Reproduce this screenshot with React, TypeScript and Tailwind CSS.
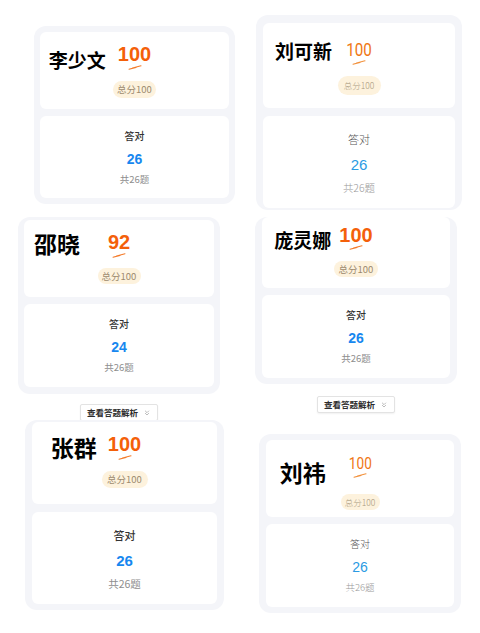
import { ChevronsDown } from "lucide-react";

type CardProps = {
  pos: string;
  pad: string;
  topH: string;
  bottomH: string;
  name: string;
  nameCls: string;
  score: string;
  scoreTop: string;
  thin?: boolean;
  big?: boolean;
  swooshMt: string;
  badgeMt: string;
  badgeCls: string;
  correct: string;
  button?: string;
};

const cjk = "font-['Noto_Sans_CJK_SC','Noto_Sans',sans-serif]";

function Swoosh({ thin }: { thin?: boolean }) {
  return (
    <svg width="14" height="5" viewBox="0 0 14 5" className="block">
      <path
        d="M1 4.2 L8 2.4 L4.5 3 L13 0.8"
        fill="none"
        stroke={thin ? "#f2913c" : "#f47b2a"}
        strokeWidth="1.1"
        strokeLinecap="round"
        strokeLinejoin="round"
      />
    </svg>
  );
}

function Card(p: CardProps) {
  return (
    <div className={`absolute flex flex-col items-center ${p.pos}`}>
      <div className={`w-full rounded-xl bg-[#f4f5f9] flex flex-col ${p.pad}`}>
        {/* score panel */}
        <div className={`rounded-md bg-white flex flex-col items-center ${p.topH} ${p.scoreTop}`}>
          <div className="w-full grid grid-cols-[1fr_auto_1fr] items-start">
            <div className={`justify-self-end ${p.nameCls}`}>
              <span className={`${cjk} font-bold text-black whitespace-nowrap block`}>{p.name}</span>
            </div>
            <div className="flex flex-col items-center">
              {p.thin ? (
                <span
                  className={`font-['Roboto',sans-serif] font-normal text-[#ef7714] leading-none scale-x-80 ${
                    p.big ? "text-[19px]" : "text-[17px]"
                  }`}
                >
                  {p.score}
                </span>
              ) : (
                <span className="font-['Liberation_Sans',sans-serif] font-bold text-[20px] leading-[20px] text-[#f4600a]">
                  {p.score}
                </span>
              )}
              <div className={p.swooshMt}>
                <Swoosh thin={p.thin} />
              </div>
            </div>
            <div />
          </div>
          <div
            className={`${p.badgeMt} ${p.badgeCls} rounded-full bg-[#fdf2dd] flex items-center justify-center ${cjk} ${
              p.thin ? "text-[8.5px] text-[#a8987c] font-light" : "text-[9.5px] text-[#9c8a6e]"
            }`}
          >
            总分100
          </div>
        </div>
        {/* correct panel */}
        <div className={`rounded-md bg-white flex flex-col items-center ${p.bottomH} ${p.big ? "mt-[8px] pt-[16px]" : "mt-[7px] pt-[13px]"}`}>
          <span
            className={`${cjk} ${p.big ? "text-[11px] leading-[15px]" : "text-[10px] leading-[14px]"} ${
              p.thin ? "text-[#555] font-light" : "text-[#333] font-medium"
            }`}
          >
            答对
          </span>
          <span
            className={`font-['Liberation_Sans',sans-serif] ${
              p.big ? "mt-[8px] text-[15px] leading-[20px]" : "mt-[7px] text-[14px] leading-[18px]"
            } ${p.thin ? "text-[#2b9be3] font-normal" : "text-[#1787ef] font-bold"}`}
          >
            {p.correct}
          </span>
          <span
            className={`${cjk} ${p.big ? "mt-[5px] text-[10.5px] leading-[15px]" : "mt-[4px] text-[9.5px] leading-[14px]"} ${
              p.thin ? "text-[#999] font-light" : "text-[#8e8e8e]"
            }`}
          >
            共26题
          </span>
        </div>
      </div>
      {p.button && (
        <div
          className={`${p.button} h-[17px] px-[6px] bg-white border border-[#e3e3e3] rounded-[2px] shadow-[0_1px_2px_rgba(0,0,0,0.06)] flex items-center gap-[5px]`}
        >
          <span className={`${cjk} text-[8.5px] font-bold text-[#2b2b2b] whitespace-nowrap`}>查看答题解析</span>
          <ChevronsDown size={8} strokeWidth={2} className="text-[#9a9a9a]" />
        </div>
      )}
    </div>
  );
}

export default function App() {
  return (
    <div className="relative w-[480px] h-[633px] bg-white overflow-hidden">
      <Card
        pos="left-[34px] top-[26px] w-[201px]"
        pad="px-[6px] pt-[6px] pb-[6px]"
        topH="h-[77px]"
        bottomH="h-[82px]"
        name="李少文"
        nameCls="mt-[6px] mr-[12px] text-[19px] leading-[19px]"
        score="100"
        scoreTop="pt-[12px]"
        swooshMt="mt-[1px]"
        badgeMt="mt-[11px]"
        badgeCls="w-[43px] h-[17px]"
        correct="26"
      />
      <Card
        pos="left-[256px] top-[15px] w-[206px]"
        pad="px-[7px] pt-[8px] pb-[2px]"
        topH="h-[85px]"
        bottomH="h-[92px]"
        name="刘可新"
        nameCls="mt-[1px] mr-[11px] text-[19px] leading-[19px]"
        score="100"
        scoreTop="pt-[17px]"
        thin
        big
        swooshMt="mt-[1px]"
        badgeMt="mt-[11px]"
        badgeCls="w-[43px] h-[19px]"
        correct="26"
      />
      <Card
        pos="left-[18px] top-[217px] w-[202px]"
        pad="px-[6px] pt-[3px] pb-[7px]"
        topH="h-[77px]"
        bottomH="h-[83px]"
        name="邵晓"
        nameCls="mt-[0px] mr-[28px] text-[23px] leading-[23px]"
        score="92"
        scoreTop="pt-[12px]"
        swooshMt="mt-[1px]"
        badgeMt="mt-[10px]"
        badgeCls="w-[43px] h-[16px]"
        correct="24"
        button="mt-[10px]"
      />
      <Card
        pos="left-[255px] top-[217px] w-[202px]"
        pad="px-[7px] pt-[0px] pb-[6px]"
        topH="h-[71px]"
        bottomH="h-[83px]"
        name="庞灵娜"
        nameCls="mt-[5px] mr-[8px] text-[19px] leading-[19px]"
        score="100"
        scoreTop="pt-[8px]"
        swooshMt="mt-[0px]"
        badgeMt="mt-[11px]"
        badgeCls="w-[44px] h-[16px]"
        correct="26"
        button="mt-[12px]"
      />
      <Card
        pos="left-[25px] top-[420px] w-[199px]"
        pad="px-[7px] pt-[2px] pb-[6px]"
        topH="h-[82px]"
        bottomH="h-[92px]"
        name="张群"
        nameCls="mt-[2px] mr-[11px] text-[23px] leading-[23px]"
        score="100"
        scoreTop="pt-[12px]"
        big
        swooshMt="mt-[1px]"
        badgeMt="mt-[11px]"
        badgeCls="w-[46px] h-[17px]"
        correct="26"
      />
      <Card
        pos="left-[259px] top-[434px] w-[202px]"
        pad="px-[7px] pt-[6px] pb-[6px]"
        topH="h-[77px]"
        bottomH="h-[83px]"
        name="刘祎"
        nameCls="mt-[6px] mr-[20px] text-[23px] leading-[23px]"
        score="100"
        scoreTop="pt-[15px]"
        thin
        swooshMt="mt-[1px]"
        badgeMt="mt-[10px]"
        badgeCls="w-[39px] h-[16px]"
        correct="26"
      />
    </div>
  );
}
